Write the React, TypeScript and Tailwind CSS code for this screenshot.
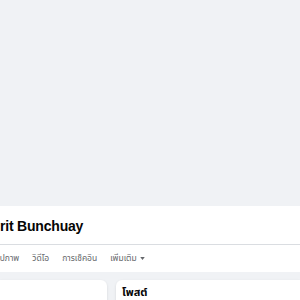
export default function App() {
  return (
    <div className="min-h-screen overflow-hidden bg-[#f0f2f5] font-['Liberation_Sans','Noto_Sans','Noto_Sans_Thai',sans-serif]">
      {/* cover area */}
      <div className="h-[206px] bg-[#f0f2f5]" />

      {/* profile header */}
      <div className="bg-white">
        <div className="border-b border-[#dadde1] pt-[10px] pb-[8px]">
          <h1 className="text-[14px] leading-[20px] font-bold tracking-[-0.2px] text-[#050505]">rit Bunchuay</h1>
        </div>
        <nav className="ml-[-11px] flex h-[27px] items-center text-[8.5px] text-[#65676b]">
          <span className="px-[6.5px]">รูปภาพ</span>
          <span className="px-[6.5px]">วิดีโอ</span>
          <span className="px-[6.5px]">การเช็คอิน</span>
          <span className="flex items-center gap-[3px] px-[6.5px]">
            เพิ่มเติม
            <svg width="5" height="3" viewBox="0 0 6 4" className="fill-[#65676b]">
              <path d="M0 0h6L3 4z" />
            </svg>
          </span>
        </nav>
      </div>

      {/* content columns */}
      <div className="flex gap-[9px] pt-[8px]">
        <div className="h-[40px] w-[107px] rounded-r-[6px] bg-white shadow-sm" />
        <div className="h-[40px] flex-1 rounded-l-[6px] bg-white px-[6px] pt-[4px] shadow-sm">
          <h2 className="text-[11px] leading-[16px] font-bold text-[#050505]">โพสต์</h2>
        </div>
      </div>
    </div>
  );
}
